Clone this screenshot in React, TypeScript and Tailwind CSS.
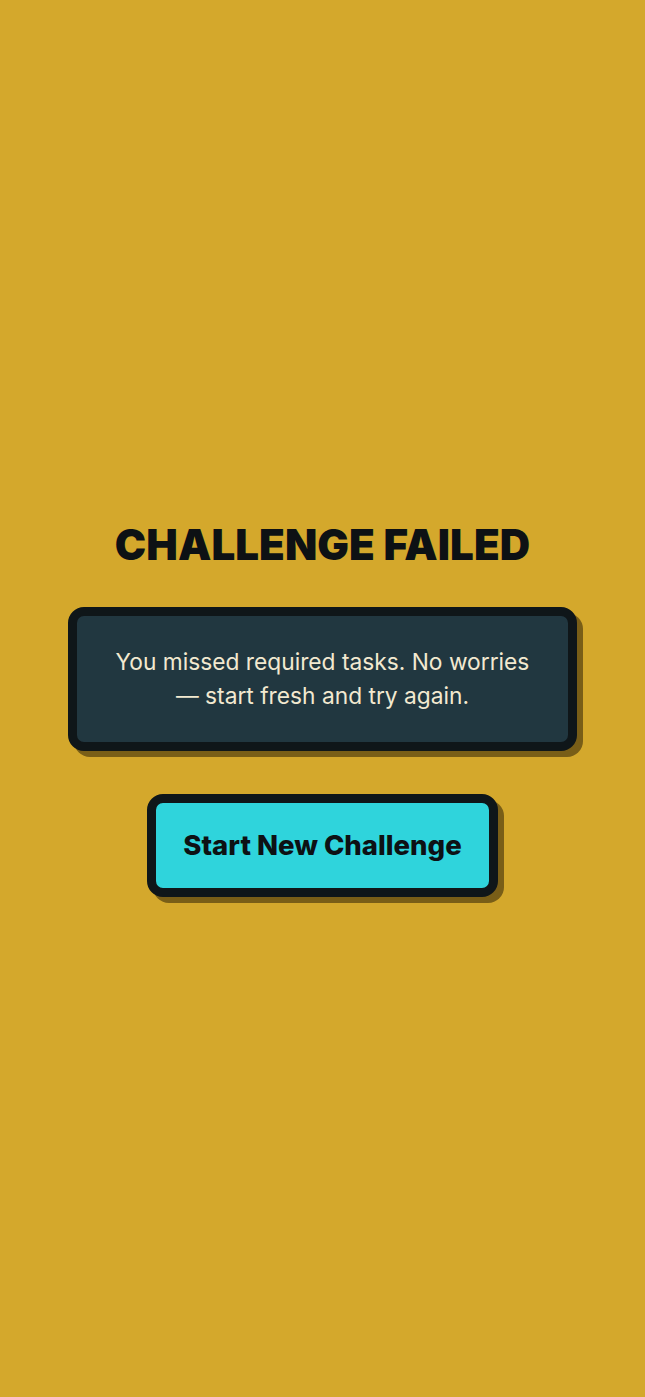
export default function App() {
  return (
    <main
      className="min-h-screen w-full bg-[#d4a82c] flex flex-col items-center justify-center px-[68px] pt-[20px]"
      style={{ fontFamily: "Inter, 'Noto Sans', sans-serif" }}
    >
      {/* Title */}
      <h1 className="text-[42px] leading-[50px] font-black text-[#0d1114] tracking-[0.1px]">
        CHALLENGE FAILED
      </h1>

      {/* Message card */}
      <div className="mt-[37px] w-full rounded-[16px] border-[9px] border-[#0f1619] bg-[#213740] px-[30px] py-[29px] text-center shadow-[6px_6px_0_rgba(60,45,10,0.6)]">
        <p className="text-[22.75px] leading-[34px] text-[#f2e9d0]">
          You missed required tasks. No worries
          <br />— start fresh and try again.
        </p>
      </div>

      {/* Action */}
      <button className="mt-[43px] rounded-[16px] border-[9px] border-[#0f1619] bg-[#2fd4dc] px-[27px] py-[24px] text-[27.5px] leading-[37px] font-extrabold text-[#0d1114] shadow-[6px_6px_0_rgba(60,45,10,0.6)]">
        Start New Challenge
      </button>
    </main>
  );
}
